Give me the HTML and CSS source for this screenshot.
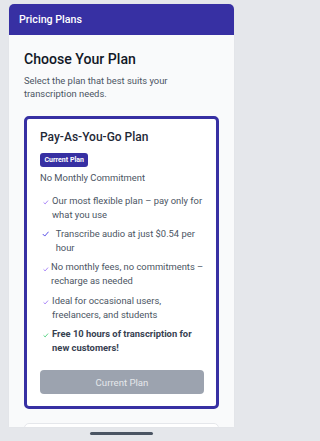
FILE: index.html
```html
<!DOCTYPE html>
<html lang="en">
<head>
<meta charset="utf-8">
<title>Pricing Plans</title>
<link rel="stylesheet" href="styles.css">
</head>
<body>
<div class="app">
  <header class="app-header">Pricing Plans</header>
  <main class="app-body">
    <h1 class="page-title">Choose Your Plan</h1>
    <p class="page-sub">Select the plan that best suits your transcription needs.</p>
    <section class="plan-card plan-card--active">
      <h2 class="plan-name">Pay-As-You-Go Plan</h2>
      <span class="badge">Current Plan</span>
      <p class="plan-price">No Monthly Commitment</p>
      <ul class="features">
        <li class="feature"><svg class="check check--sm" viewBox="0 0 10 8"><path d="M1 4.2 L3.8 7 L9 1" fill="none" stroke="currentColor" stroke-width="1.3"/></svg><span>Our most flexible plan – pay only for what you use</span></li>
        <li class="feature"><svg class="check check--lg" viewBox="0 0 10 8"><path d="M1 4.2 L3.8 7 L9 1" fill="none" stroke="currentColor" stroke-width="1.3"/></svg><span>Transcribe audio at just $0.54 per hour</span></li>
        <li class="feature feature--tight"><svg class="check check--sm" viewBox="0 0 10 8"><path d="M1 4.2 L3.8 7 L9 1" fill="none" stroke="currentColor" stroke-width="1.3"/></svg><span>No monthly fees, no commitments – recharge as needed</span></li>
        <li class="feature"><svg class="check check--sm" viewBox="0 0 10 8"><path d="M1 4.2 L3.8 7 L9 1" fill="none" stroke="currentColor" stroke-width="1.3"/></svg><span>Ideal for occasional users, freelancers, and students</span></li>
        <li class="feature feature--bold"><svg class="check check--sm check--green" viewBox="0 0 10 8"><path d="M1 4.2 L3.8 7 L9 1" fill="none" stroke="currentColor" stroke-width="1.3"/></svg><span>Free 10 hours of transcription for new customers!</span></li>
      </ul>
      <button class="plan-btn" disabled>Current Plan</button>
    </section>
    <section class="plan-card"></section>
  </main>
</div>
<div class="home-bar"></div>
</body>
</html>
```

FILE: styles.css
```css
* { box-sizing: border-box; }
html { background: #e5e7eb; }
html, body { margin: 0; padding: 0; }
body {
  background: #e5e7eb;
  font-family: Roboto, "Liberation Sans", sans-serif;
  width: 243px;
  height: 441px;
  overflow: hidden;
}
.app {
  margin: 4px 0 0 9px;
  width: 225px;
  height: 423px;
  border-radius: 5px 5px 0 0;
  overflow: hidden;
  background: #f9fafb;
  display: flex;
  flex-direction: column;
  box-shadow: 0 0 1px rgba(0,0,0,0.08);
}
.app-header {
  flex: none;
  height: 31px;
  background: #3730a3;
  color: #fff;
  font-size: 10.7px;
  font-weight: 500;
  display: flex;
  align-items: center;
  padding-left: 10px;
}
.app-body {
  flex: 1;
  padding: 14px 15px 0 15px;
  overflow: hidden;
}
.page-title {
  margin: 0;
  font-size: 14.1px;
  line-height: 20px;
  font-weight: 500;
  color: #111827;
}
.page-sub {
  margin: 4.5px 0 0;
  font-size: 9.4px;
  line-height: 13.5px;
  color: #4b5563;
}
.plan-card {
  margin-top: 14.3px;
  background: #fff;
  border: 1px solid #e5e7eb;
  border-radius: 5px;
  min-height: 40px;
}
.plan-card--active {
  margin-top: 15px;
  border: 3px solid #3730a3;
  padding: 11.5px 12px 12px 13px;
}
.plan-name {
  margin: 0;
  font-size: 12px;
  line-height: 15px;
  font-weight: 500;
  color: #1f2937;
}
.badge {
  display: inline-block;
  margin-top: 7.5px;
  background: #3730a3;
  color: #fff;
  font-size: 7px;
  font-weight: 700;
  line-height: 14.6px;
  padding: 0 4.5px;
  border-radius: 3px;
  vertical-align: top;
}
.plan-price {
  margin: 4px 0 0;
  font-size: 9.4px;
  line-height: 14px;
  color: #4b5563;
}
.features {
  list-style: none;
  margin: 8.7px 0 0;
  padding: 0;
}
.feature {
  display: flex;
  align-items: flex-start;
  font-size: 9.4px;
  line-height: 14px;
  color: #4b5563;
  margin-bottom: 5.3px;
}
.feature:last-child { margin-bottom: 0; }
.check {
  flex: none;
  color: #8b5cf6;
}
.check--sm {
  width: 5.6px;
  height: 4.5px;
  margin: 6.3px 3.1px 0 3.4px;
}
.check--lg {
  width: 7.3px;
  height: 5.8px;
  margin: 4px 6.7px 0 1.7px;
  color: #4f46e5;
}
.feature--tight .check--sm { margin-right: 2.1px; }
.check--green { color: #22c55e; }
.feature--bold { font-weight: 700; color: #374151; }
.plan-btn {
  display: block;
  width: 100%;
  margin-top: 15.5px;
  height: 23.3px;
  border: 0;
  border-radius: 4px;
  background: #9ca3af;
  color: #e5e7eb;
  font-family: inherit;
  font-size: 9.6px;
}
.home-bar {
  width: 63px;
  height: 2.6px;
  margin: 5.3px 0 0 90px;
  background: #4b5563;
  border-radius: 2px;
}
```
